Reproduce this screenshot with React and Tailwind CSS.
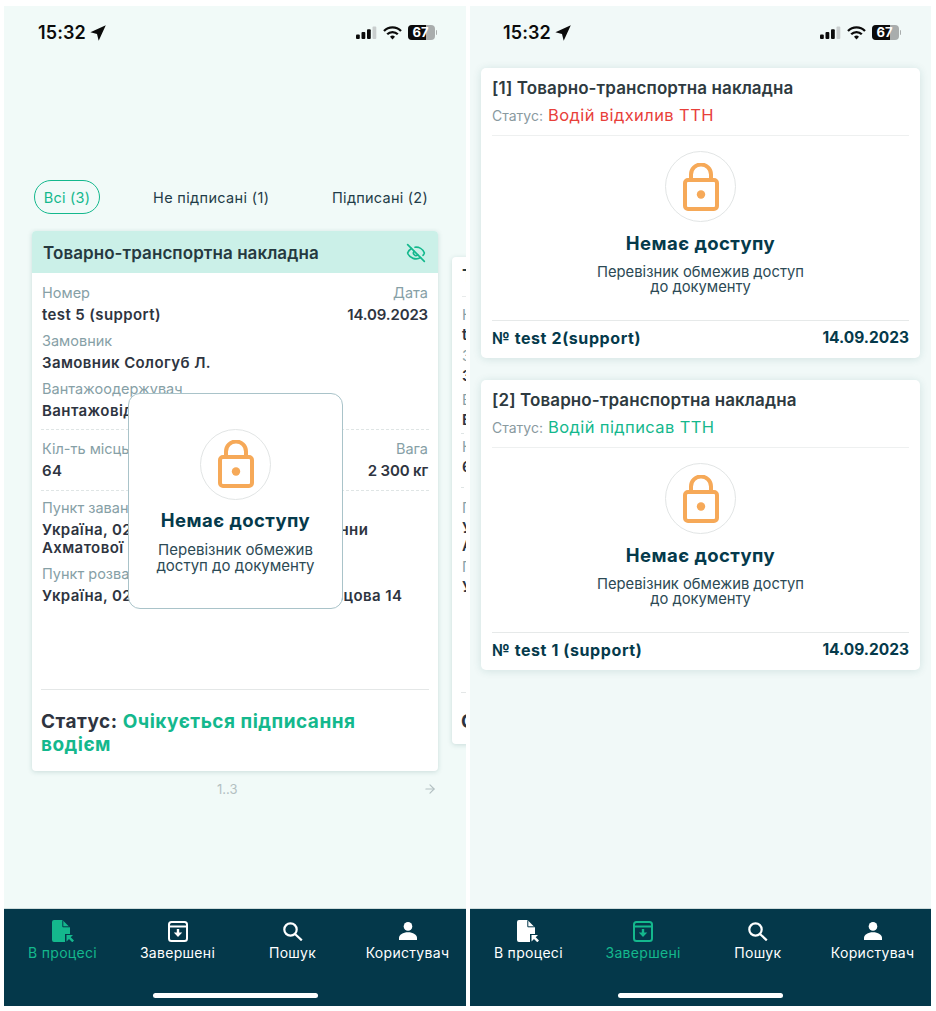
import React from "react";
import { EyeOff, ArrowRight } from "lucide-react";

const font = { fontFamily: "Inter, 'Noto Sans', sans-serif" };

function StatusBar({ pl, pr }) {
  return (
    <div className={`flex items-center justify-between h-[52px] pt-[1px] ${pl} ${pr}`}>
      <div className="flex items-center gap-[4px] text-[18px] font-semibold tracking-[0.1px] text-[#0b0b0b] leading-none">
        <span>15:32</span>
        <svg width="16" height="16" viewBox="0 0 16 16"><path d="M15.8.2.4 7.3l6.6 1.7L8.700 15.800z" fill="#0b0b0b" /></svg>
      </div>
      <div className="flex items-center gap-[6px]">
        <svg width="21" height="14" viewBox="0 0 21 14">
          <rect x="0" y="8.500" width="3.800" height="4.500" rx="1" fill="#0b0b0b" />
          <rect x="5.500" y="6" width="3.800" height="7" rx="1" fill="#0b0b0b" />
          <rect x="11" y="3.300" width="3.800" height="9.700" rx="1" fill="#0b0b0b" />
          <rect x="16.500" y="0.500" width="3.800" height="12.500" rx="1" fill="#c9cece" />
        </svg>
        <svg width="19" height="14" viewBox="0 0 19 14" fill="none" stroke="#0b0b0b" strokeWidth="2.300" strokeLinecap="butt">
          <path d="M1 5a12 12 0 0 1 17 0" />
          <path d="M4.200 8.300a7.500 7.500 0 0 1 10.600 0" />
          <path d="M9.500 13.500 7 10.800a3.500 3.500 0 0 1 5 0z" fill="#0b0b0b" stroke="none" />
        </svg>
        <div className="relative flex items-center">
          <div className="w-[27px] h-[15px] rounded-[4px] overflow-hidden bg-[#a9adad] flex">
            <div className="w-[18px] h-full bg-[#0b0b0b]" />
          </div>
          <span className="absolute left-[5px] top-[0px] text-[13px] leading-[15px] font-bold text-white">67</span>
          <div className="w-[1.5px] h-[5px] ml-[1px] bg-[#a9adad] rounded-r" />
        </div>
      </div>
    </div>
  );
}

function Lock() {
  return (
    <div className="w-[71px] h-[71px] rounded-full border border-[#e2e5e5] flex items-center justify-center shrink-0">
      <svg width="36" height="48" viewBox="0 0 36 48" fill="none" stroke="#f6a958" strokeWidth="4">
        <rect x="2" y="17" width="32" height="29" rx="3" />
        <path d="M8 17v-5.500a10 10 0 0 1 20 0V17" />
        <circle cx="18" cy="31.500" r="4.200" fill="#f6a958" stroke="none" />
      </svg>
    </div>
  );
}

function Field({ label, value, right, rightValue, compact }) {
  const mt = compact ? "mt-[1px]" : "mt-[3px]";
  return (
    <div className="flex justify-between whitespace-nowrap">
      <div>
        <div className="text-[14.5px] leading-[20px] text-[#86a0a6]">{label}</div>
        <div className={`text-[15px] leading-[18px] font-semibold tracking-[0.4px] text-[#2e3440] whitespace-pre ${mt}`}>{value}</div>
      </div>
      {right && (
        <div className="text-right">
          <div className="text-[14.5px] leading-[20px] text-[#86a0a6]">{right}</div>
          <div className={`text-[15px] leading-[18px] font-semibold tracking-[-0.15px] text-[#2e3440] ${mt}`}>{rightValue}</div>
        </div>
      )}
    </div>
  );
}

function Dash() {
  return <div className="border-t border-dashed border-[#dfe5e5] -mx-[1px]" />;
}

function TtnBody({ compact }) {
  const g = compact
    ? ["h-[2px]", "h-[5px]", "h-[4px]", "h-[3px]", "h-[11px]", "h-[10px]", "h-[2px]"]
    : ["h-[7px]", "h-[7px]", "h-[9px]", "h-[9px]", "h-[10px]", "h-[7px]", "h-[7px]"];
  return (
    <div className={`px-[10px] flex flex-col ${compact ? "pt-[8px]" : "pt-[10px]"}`}>
      <Field compact={compact} label="Номер" value="test 5 (support)" right="Дата" rightValue="14.09.2023" />
      <div className={g[0]} />
      <Field compact={compact} label="Замовник" value="Замовник Сологуб Л." />
      <div className={g[1]} />
      <Field compact={compact} label="Вантажоодержувач" value="Вантажовідправник" />
      <div className={g[2]} />
      <Dash />
      <div className={g[3]} />
      <Field compact={compact} label="Кіл-ть місць" value="64" right="Вага" rightValue="2 300 кг" />
      <div className={g[4]} />
      <Dash />
      <div className={g[5]} />
      <Field compact={compact} label="Пункт завантаження" value={"Україна, 02000, м. Київ, набережна Анни\nАхматової"} />
      <div className={g[6]} />
      <Field compact={compact} label="Пункт розвантаження" value="Україна, 02000, м. Київ, бульвар Кравцова 14" />
    </div>
  );
}

function Carousel() {
  return (
    <div className="flex items-center gap-[14px] overflow-hidden pl-[28px] pt-[3px] pb-[8px] h-[550px]">
      <div className="relative w-[406px] h-[540px] shrink-0 bg-white rounded-[4px] shadow-[0_1px_5px_rgba(20,90,90,0.18)] flex flex-col">
        <div className="h-[42px] bg-[#cbf0e8] rounded-t-[4px] flex items-center justify-between pl-[11px] pr-[12px] pt-[2px]">
          <span className="mt-[2px] text-[17px] font-semibold tracking-[0.07px] text-[#26393f]">Товарно-транспортна накладна</span>
          <EyeOff size={20} color="#14b88d" strokeWidth={2} />
        </div>
        <TtnBody />
        <div className="mt-auto mx-[9px] border-t border-[#e4e7e7] pt-[20px] pb-[15px] text-[19px] leading-[23px] font-bold tracking-[0.5px] text-[#2e3440]">
          Статус: <span className="text-[#14b88d]">Очікується підписання<br />водієм</span>
        </div>
        <div className="absolute left-[96px] top-[162px] w-[215px] h-[216px] bg-white border border-[#a9c3c9] rounded-[12px] flex flex-col items-center pt-[35px]">
          <Lock />
          <div className="mt-[8px] text-[18.5px] leading-[24px] font-bold tracking-[0.45px] text-[#053a4b]">Немає доступу</div>
          <div className="mt-[10px] text-[15px] leading-[16px] text-[#2c4a55] text-center whitespace-nowrap">Перевізник обмежив<br />доступ до документу</div>
        </div>
      </div>
      <div className="w-[406px] h-[487px] shrink-0 bg-white rounded-[4px] shadow-[0_1px_5px_rgba(20,90,90,0.18)] flex flex-col">
        <div className="mx-[10px] h-[40px] border-b border-[#e8ebeb] flex items-center text-[17px] font-semibold tracking-[0.07px] text-[#26393f] whitespace-nowrap">Товарно-транспортна накладна</div>
        <TtnBody compact />
        <div className="mt-auto mx-[9px] border-t border-[#e4e7e7] pt-[17px] pb-[11px] text-[19px] leading-[23px] font-bold text-[#2e3440]">Статус:</div>
      </div>
    </div>
  );
}

function DocCard({ n, statusText, statusColor, num }) {
  return (
    <div className="h-[290px] bg-white rounded-[5px] shadow-[0_1px_8px_rgba(20,90,90,0.14)] px-[11px] flex flex-col">
      <div className="pt-[9px] text-[17px] leading-[22px] font-semibold tracking-[0.1px] text-[#2e3a40]">[{n}] Товарно-транспортна накладна</div>
      <div className="mt-[5px] flex items-baseline gap-[5px] leading-[22px]">
        <span className="text-[14px] text-[#8a9a9f]">Статус:</span>
        <span className={`text-[16.5px] tracking-[0.4px] ${statusColor}`}>{statusText}</span>
      </div>
      <div className="mt-[8px] border-t border-[#eef0f0]" />
      <div className="flex flex-col items-center pt-[15px]">
        <Lock />
        <div className="mt-[9px] text-[18.5px] leading-[24px] font-bold tracking-[0.45px] text-[#053a4b]">Немає доступу</div>
        <div className="mt-[10px] text-[14.75px] leading-[15px] text-[#2c4a55] text-center">Перевізник обмежив доступ<br />до документу</div>
      </div>
      <div className="mt-auto border-t border-[#e6e9e9] h-[38px] pb-[4px] flex items-center justify-between font-bold text-[#053a4b]">
        <span className="text-[16px] tracking-[0.6px]">№ {num}</span>
        <span className="text-[15.5px]">14.09.2023</span>
      </div>
    </div>
  );
}

function DocIcon({ color }) {
  return (
    <svg width="22" height="22" viewBox="0 0 22 22">
      <path d="M0 2a2 2 0 0 1 2-2h8.500L18 7.500V14h-5v8H2a2 2 0 0 1-2-2z" fill={color} />
      <path d="M10.800.3v6.500h6.800" fill="none" stroke="#04384a" strokeWidth="1" />
      <path d="M14.500 15h6.500l-2.300 2.300 3.300 3.300-1.700 1.700-3.300-3.300-2.500 2.400z" fill={color} />
    </svg>
  );
}

function ArchiveIcon({ color }) {
  return (
    <svg width="20" height="21" viewBox="0 0 20 21" fill="none">
      <rect x="1" y="1" width="18" height="19" rx="2.500" stroke={color} strokeWidth="2" />
      <path d="M1 5.500h18" stroke={color} strokeWidth="2" />
      <path d="M10 8v4" stroke={color} strokeWidth="2.400" />
      <path d="M5.800 11.500h8.400L10 16z" fill={color} />
    </svg>
  );
}

function SearchIcon({ color }) {
  return (
    <svg width="20" height="19" viewBox="0 0 20 19" fill="none" stroke={color} strokeWidth="2.200">
      <circle cx="7.500" cy="7.500" r="6.200" />
      <path d="M12 12l6.800 6.400" />
    </svg>
  );
}

function UserIcon({ color }) {
  return (
    <svg width="20" height="18" viewBox="0 0 20 18">
      <circle cx="10" cy="4.400" r="4.300" fill={color} />
      <path d="M1 18v-2C1 12.800 5 10.300 10 10.300s9 2.500 9 5.700v2z" fill={color} />
    </svg>
  );
}

function BottomNav({ active }) {
  const items = [
    { label: "В процесі", Icon: DocIcon },
    { label: "Завершені", Icon: ArchiveIcon },
    { label: "Пошук", Icon: SearchIcon },
    { label: "Користувач", Icon: UserIcon },
  ];
  return (
    <div className="h-[98px] mt-auto bg-[#04384a] border-t border-[#cfdcdc] flex flex-col">
      <div className="grid grid-cols-4 pt-[10px] px-[1px]">
        {items.map(({ label, Icon }, i) => {
          const color = i === active ? "#14b88d" : "#ffffff";
          return (
            <div key={label} className="flex flex-col items-center">
              <div className="h-[24px] flex items-center justify-center"><Icon color={color} /></div>
              <span className={`text-[14px] leading-[20px] tracking-[0.3px] ${i === active ? "text-[#14b88d]" : "text-white"}`}>{label}</span>
            </div>
          );
        })}
      </div>
      <div className="mt-auto mb-[8px] mx-auto w-[165px] h-[5px] rounded-full bg-white" />
    </div>
  );
}

export default function App() {
  return (
    <div style={font} className="w-[936px] h-[1011px] bg-white flex gap-[4px] pl-[4px] pt-[6px]">
      <div className="w-[462px] h-[1000px] bg-[#f1faf8] flex flex-col overflow-hidden">
        <StatusBar pl="pl-[34px]" pr="pr-[29px]" />
        <div className="mt-[122px] flex items-center pl-[30px] pr-[38px] text-[14.5px] tracking-[0.25px] text-[#1f3c48]">
          <span className="h-[34px] w-[66px] flex items-center justify-center pt-[1px] border border-[#14b88d] rounded-full text-[#14b88d]">Всі (3)</span>
          <span className="ml-[53px] pt-[1px] tracking-[0.35px]">Не підписані (1)</span>
          <span className="ml-auto pt-[1px]">Підписані (2)</span>
        </div>
        <div className="mt-[14px]"><Carousel /></div>
        <div className="relative h-[24px] text-[13px] text-[#b3c0c2]">
          <span className="absolute left-[213px] top-[2px]">1..3</span>
          <ArrowRight size={14} className="absolute left-[419px] top-[4px]" color="#b3c0c2" />
        </div>
        <BottomNav active={0} />
      </div>
      <div className="w-[461px] h-[1000px] bg-[#f1f9f8] flex flex-col overflow-hidden">
        <StatusBar pl="pl-[33px]" pr="pr-[30px]" />
        <div className="px-[11px] pt-[10px] flex flex-col gap-[22px]">
          <DocCard n={1} statusText="Водій відхилив ТТН" statusColor="text-[#e8403a]" num="test 2(support)" />
          <DocCard n={2} statusText="Водій підписав ТТН" statusColor="text-[#14b88d]" num="test 1 (support)" />
        </div>
        <BottomNav active={1} />
      </div>
    </div>
  );
}
